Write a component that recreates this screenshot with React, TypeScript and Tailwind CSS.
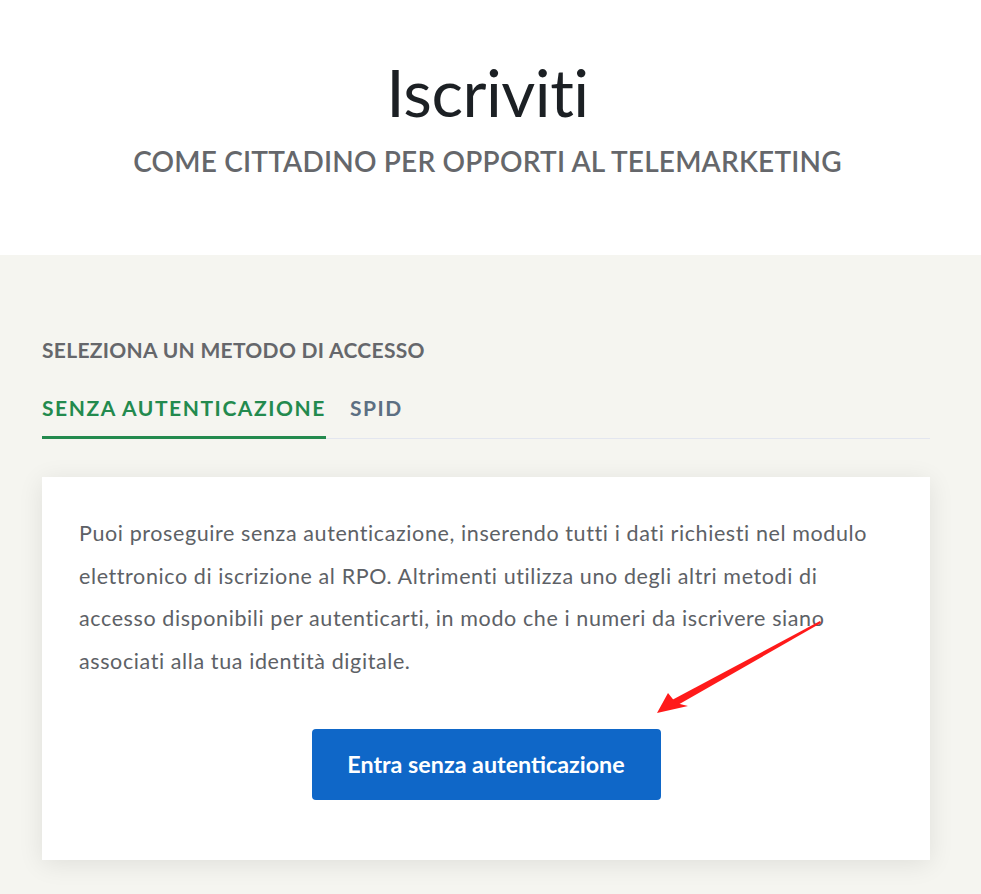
import React from 'react';

const font = { fontFamily: 'Lato, "Noto Sans", sans-serif' };

const Arrow = () => (
  <svg
    className="absolute left-0 top-0 pointer-events-none"
    width="981"
    height="894"
    viewBox="0 0 981 894"
  >
    {/* tapered shaft */}
    <polygon points="820,621 821,623 676,706 672,700" fill="#ff1a1a" />
    {/* head */}
    <polygon points="657,713 668,693 676,703 688,706" fill="#ff1a1a" />
  </svg>
);

export default function App() {
  return (
    <div className="relative min-h-[894px] bg-[#f5f5f0]" style={font}>
      {/* header */}
      <div className="bg-white h-[255px] flex flex-col items-center pt-[53px]">
        <h1 className="text-[66px] leading-[77px] font-normal text-[#1c2024] -ml-[6px] tracking-[-0.5px]">
          Iscriviti
        </h1>
        <p className="mt-[14px] text-[28px] leading-[34px] font-semibold text-[#65676b] tracking-[0.2px] -ml-[6px]">
          COME CITTADINO PER OPPORTI AL TELEMARKETING
        </p>
      </div>

      {/* access section */}
      <div className="px-[42px] pt-[83px] pb-[34px] w-[972px]">
        <h2 className="text-[21px] leading-[24px] font-bold text-[#65676b] tracking-[0.3px]">
          SELEZIONA UN METODO DI ACCESSO
        </h2>

        <div className="mt-[32px] flex border-b border-[#e3e6ef]">
          <div className="pb-[14px] border-b-[3px] border-[#238a4e] -mb-[1px] text-[21px] leading-[28px] font-bold text-[#238a4e] tracking-[1.55px]">
            SENZA AUTENTICAZIONE
          </div>
          <div className="ml-[24px] pb-[14px] text-[21px] leading-[28px] font-bold text-[#5c6f82] tracking-[1.55px]">
            SPID
          </div>
        </div>

        <div className="mt-[38px] bg-white shadow-[0_4px_24px_rgba(0,0,0,0.09)] px-[37px] pt-[35px] pb-[60px]">
          <p className="text-[21.5px] leading-[42.5px] text-[#5d6166] tracking-[0.6px]">
            Puoi proseguire senza autenticazione, inserendo tutti i dati richiesti nel modulo
            <br />
            elettronico di iscrizione al RPO. Altrimenti utilizza uno degli altri metodi di
            <br />
            accesso disponibili per autenticarti, in modo che i numeri da iscrivere siano
            <br />
            associati alla tua identità digitale.
          </p>
          <div className="mt-[47px] flex justify-center">
            <button className="w-[349px] h-[71px] rounded-[4px] bg-[#0f67c8] text-white text-[23.3px] font-bold">
              Entra senza autenticazione
            </button>
          </div>
        </div>
      </div>

      <Arrow />
    </div>
  );
}
